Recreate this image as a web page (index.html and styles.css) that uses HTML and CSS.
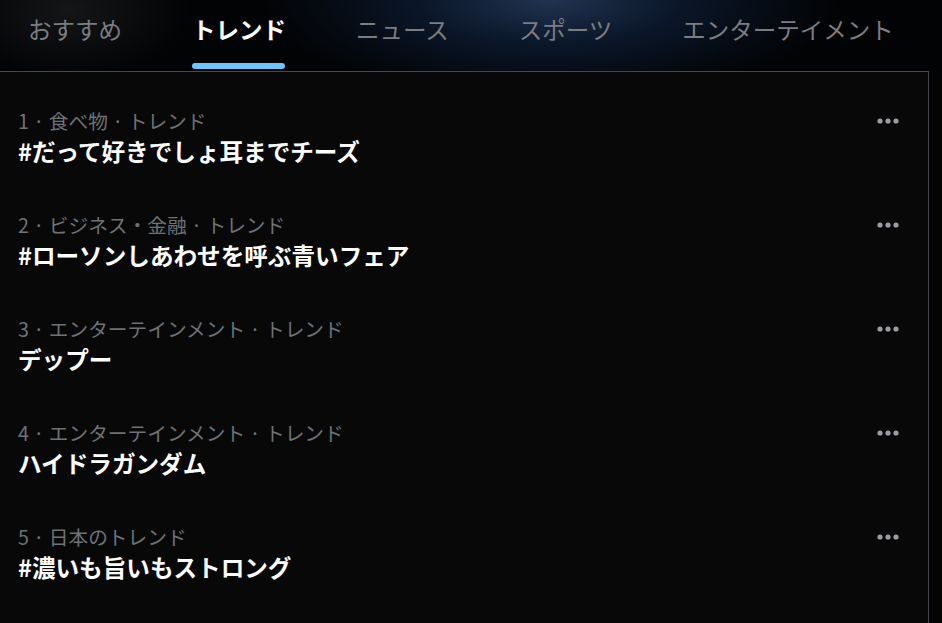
FILE: index.html
```html
<!DOCTYPE html>
<html lang="ja">
<head>
<meta charset="utf-8">
<title>トレンド</title>
<link rel="stylesheet" href="styles.css">
</head>
<body>
<div class="page">
  <nav class="tabs">
    <a class="tab">おすすめ</a>
    <a class="tab active">トレンド</a>
    <a class="tab">ニュース</a>
    <a class="tab">スポーツ</a>
    <a class="tab">エンターテイメント</a>
  </nav>
  <section class="panel">
    <div class="trend">
      <div class="trend-body">
        <div class="meta">1 · 食べ物 · トレンド</div>
        <div class="title">#だって好きでしょ耳までチーズ</div>
      </div>
      <button class="more" aria-label="その他"><svg viewBox="0 0 24 8" width="24" height="8"><circle cx="4" cy="4" r="2.6"/><circle cx="12" cy="4" r="2.6"/><circle cx="20" cy="4" r="2.6"/></svg></button>
    </div>
    <div class="trend">
      <div class="trend-body">
        <div class="meta">2 · ビジネス・金融 · トレンド</div>
        <div class="title">#ローソンしあわせを呼ぶ青いフェア</div>
      </div>
      <button class="more" aria-label="その他"><svg viewBox="0 0 24 8" width="24" height="8"><circle cx="4" cy="4" r="2.6"/><circle cx="12" cy="4" r="2.6"/><circle cx="20" cy="4" r="2.6"/></svg></button>
    </div>
    <div class="trend">
      <div class="trend-body">
        <div class="meta">3 · エンターテインメント · トレンド</div>
        <div class="title">デップー</div>
      </div>
      <button class="more" aria-label="その他"><svg viewBox="0 0 24 8" width="24" height="8"><circle cx="4" cy="4" r="2.6"/><circle cx="12" cy="4" r="2.6"/><circle cx="20" cy="4" r="2.6"/></svg></button>
    </div>
    <div class="trend">
      <div class="trend-body">
        <div class="meta">4 · エンターテインメント · トレンド</div>
        <div class="title">ハイドラガンダム</div>
      </div>
      <button class="more" aria-label="その他"><svg viewBox="0 0 24 8" width="24" height="8"><circle cx="4" cy="4" r="2.6"/><circle cx="12" cy="4" r="2.6"/><circle cx="20" cy="4" r="2.6"/></svg></button>
    </div>
    <div class="trend">
      <div class="trend-body">
        <div class="meta">5 · 日本のトレンド</div>
        <div class="title">#濃いも旨いもストロング</div>
      </div>
      <button class="more" aria-label="その他"><svg viewBox="0 0 24 8" width="24" height="8"><circle cx="4" cy="4" r="2.6"/><circle cx="12" cy="4" r="2.6"/><circle cx="20" cy="4" r="2.6"/></svg></button>
    </div>
  </section>
</div>
</body>
</html>
```

FILE: styles.css
```css
* { box-sizing: border-box; }

html, body {
  margin: 0;
  height: 100%;
  background: #040404;
  font-family: "Noto Sans CJK JP", "Noto Sans", sans-serif;
  overflow: hidden;
}

.page {
  width: 942px;
  height: 623px;
  display: flex;
  flex-direction: column;
}

/* tab strip with a soft blue glow behind it */
.tabs {
  height: 71px;
  flex: none;
  display: flex;
  align-items: stretch;
  padding-left: 28px;
  background:
    radial-gradient(ellipse 290px 100px at 550px 0px, rgba(34, 54, 84, 0.95) 0%, rgba(14, 30, 56, 0.7) 45%, rgba(6, 12, 22, 0) 100%),
    radial-gradient(ellipse 120px 70px at 70px 10px, rgba(40, 40, 44, 0.5) 0%, rgba(20, 20, 22, 0) 100%),
    #020304;
}

.tab {
  position: relative;
  display: flex;
  align-items: center;
  padding-bottom: 11px;
  font-size: 23.5px;
  line-height: 1;
  color: #7a7d82;
  cursor: pointer;
}

.tab + .tab { margin-left: 70px; }

.tab.active {
  color: #ffffff;
  font-weight: 700;
}

.tab.active::after {
  content: "";
  position: absolute;
  left: 0;
  right: 1px;
  bottom: 2px;
  height: 6px;
  border-radius: 3px;
  background: #6cc6fa;
}

/* trends list */
.panel {
  flex: 1;
  width: 929px;
  background: #080808;
  border-top: 1px solid #45484c;
  border-right: 1px solid #45484c;
  padding-top: 36px;
}

.trend {
  display: flex;
  align-items: flex-start;
  justify-content: space-between;
  padding: 0 28px 0 18px;
  height: 104px;
}

.meta {
  font-size: 19.7px;
  line-height: 26px;
  color: #6e7277;
}

.title {
  margin-top: 2px;
  font-size: 23.6px;
  line-height: 30px;
  font-weight: 700;
  color: #ffffff;
}

.more {
  margin-top: 9px;
  padding: 0;
  border: 0;
  background: none;
  display: flex;
}

.more svg { fill: #9a9da2; }
```
